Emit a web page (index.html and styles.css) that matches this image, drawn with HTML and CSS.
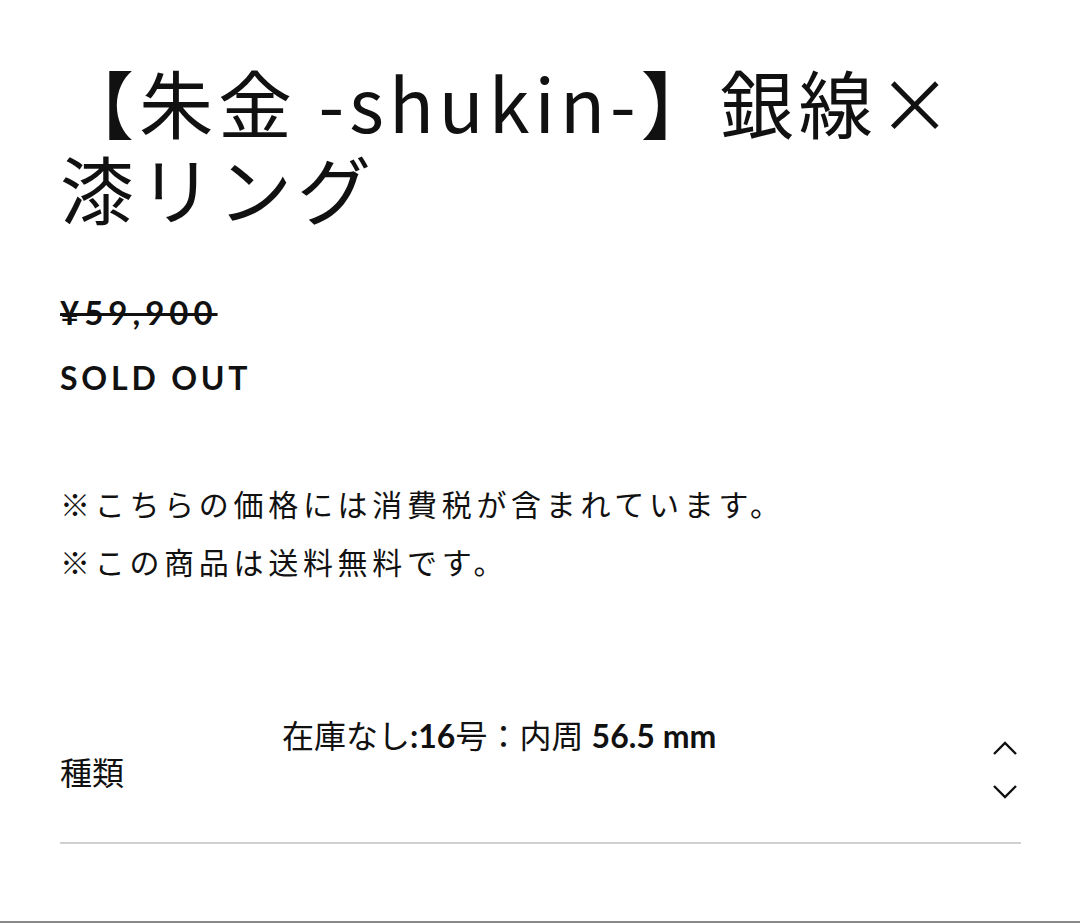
FILE: index.html
```html
<!DOCTYPE html>
<html lang="ja">
<head>
<meta charset="utf-8">
<link rel="stylesheet" href="styles.css">
</head>
<body>
<main class="product">
  <h1 class="title">【朱金 -shukin-】銀線×漆リング</h1>
  <div class="price">¥59,900</div>
  <div class="soldout">SOLD OUT</div>
  <div class="notes">
    <p>※こちらの価格には消費税が含まれています。</p>
    <p>※この商品は送料無料です。</p>
  </div>
  <div class="variant">
    <div class="label">種類</div>
    <div class="value">在庫なし<b>:16</b>号：内周 <b>56.5 mm</b></div>
    <div class="arrows">
      <svg width="28" height="18" viewBox="0 0 28 18"><path d="M3 15 L14 4 L25 15" fill="none" stroke="#111" stroke-width="2.4"/></svg>
      <svg width="28" height="18" viewBox="0 0 28 18"><path d="M3 3 L14 14 L25 3" fill="none" stroke="#111" stroke-width="2.4"/></svg>
    </div>
  </div>
</main>
<div class="bottom"></div>
</body>
</html>
```
FILE: styles.css
```css
html, body { margin: 0; padding: 0; background: #fff; }
body {
  color: #111;
  font-family: Lato, "Noto Sans CJK JP", sans-serif;
  height: 923px;
  position: relative;
  overflow: hidden;
}
.product { padding: 0 59px 0 60px; }
.title {
  font-family: "Noto Sans CJK JP", sans-serif;
  font-weight: 400;
  font-size: 74px;
  line-height: 86px;
  margin: 58px 0 0 0;
  letter-spacing: 5px;
}
.price {
  margin-top: 62px;
  font-size: 33px;
  font-weight: 700;
  letter-spacing: 5px;
  text-decoration: line-through;
  text-decoration-thickness: 3px;
  line-height: 40px;
}
.soldout {
  margin-top: 26px;
  font-size: 32px;
  font-weight: 700;
  letter-spacing: 3.8px;
  line-height: 40px;
}
.notes {
  margin-top: 76px;
  font-family: "Noto Sans CJK JP", sans-serif;
  font-size: 30px;
  letter-spacing: 4.7px;
}
.notes p { margin: 0; line-height: 58px; }
.variant {
  margin-top: 120px;
  display: flex;
  align-items: flex-start;
  border-bottom: 2px solid #d0d0d0;
  height: 132px;
}
.label {
  font-family: "Noto Sans CJK JP", sans-serif;
  font-size: 32px;
  line-height: 40px;
  width: 222px;
  padding-top: 41px;
}
.value {
  flex: 1;
  font-size: 32px;
  line-height: 40px;
  padding-top: 6px;
}
.value b { font-weight: 700; }
.arrows {
  display: flex;
  flex-direction: column;
  gap: 26px;
  width: 30px;
  padding-top: 29px;
}
.bottom { position: absolute; left: 0; right: 0; bottom: 0; height: 2px; background: #888; }
```
